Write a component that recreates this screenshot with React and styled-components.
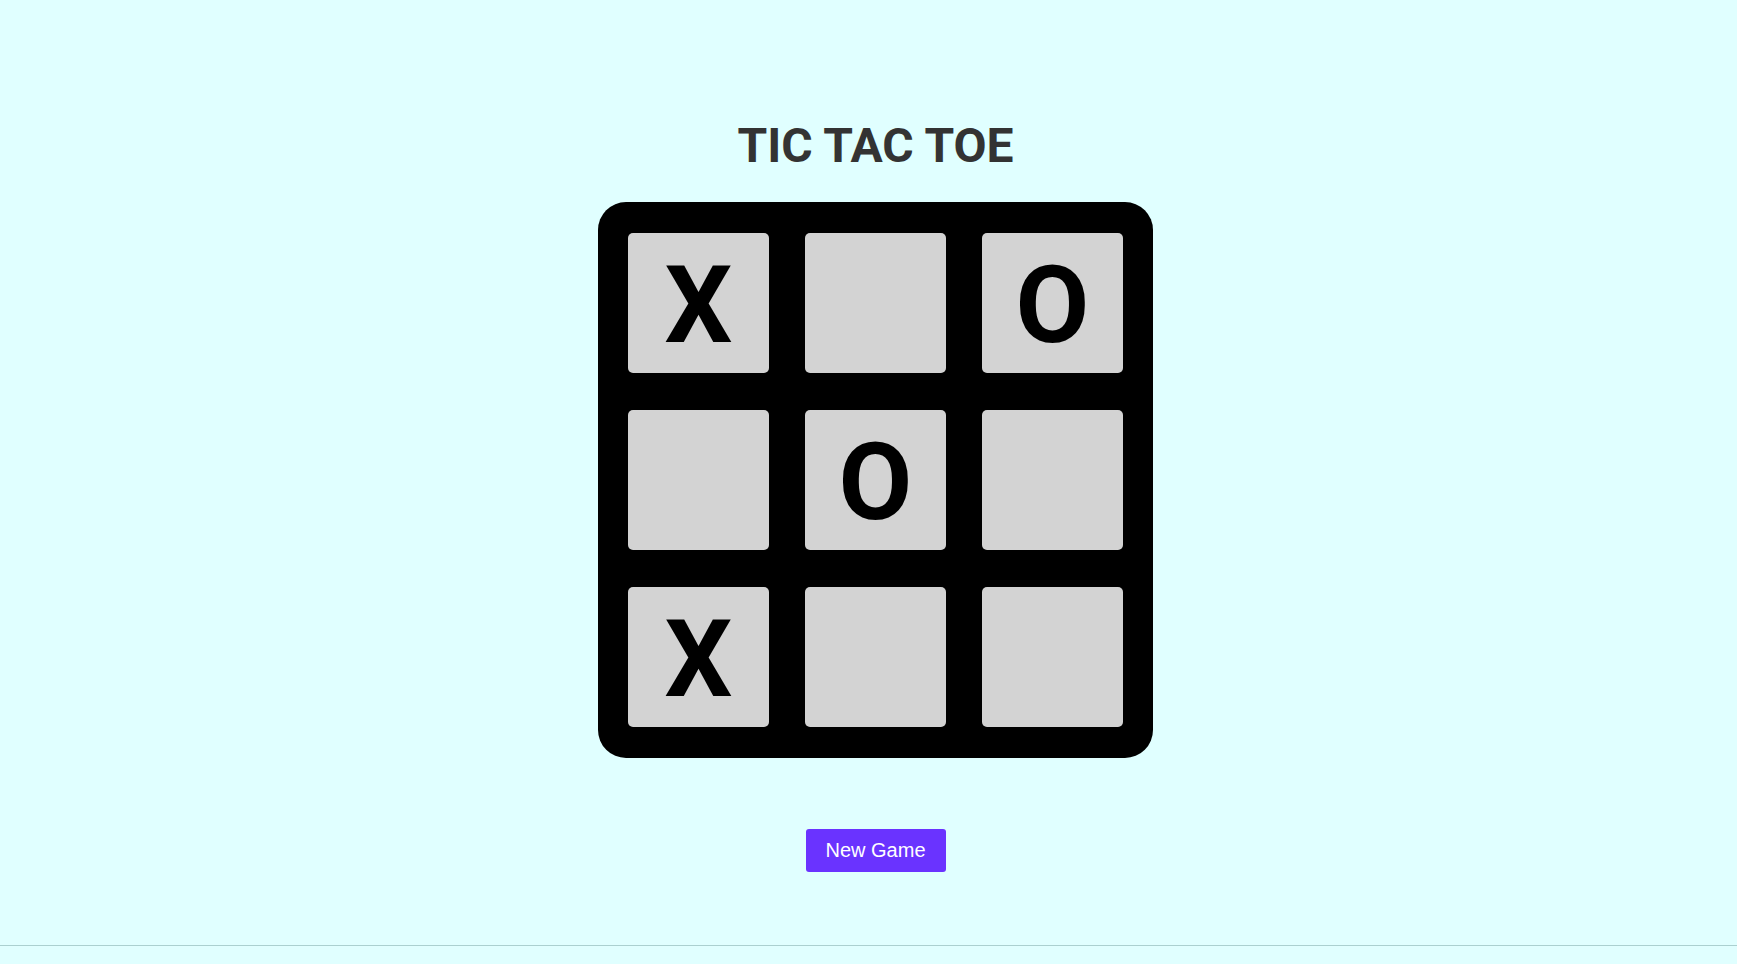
import React, { useState } from "react";
import styled, { createGlobalStyle } from "styled-components";

const GlobalStyle = createGlobalStyle`
  body {
    margin: 0;
    background-color: #e0ffff;
    font-family: Roboto, "Liberation Sans", Arial, sans-serif;
  }
`;

const Main = styled.main`
  height: 946px;
  box-sizing: border-box;
  padding: 118px 0 0 14px;
  display: flex;
  flex-direction: column;
  align-items: center;
  border-bottom: 1px solid #abd0d0;
`;

const Title = styled.h1`
  margin: 0;
  font-size: 48px;
  font-weight: 700;
  line-height: 55px;
  color: #333333;
`;

const Board = styled.div`
  margin-top: 29px;
  width: 555px;
  height: 556px;
  box-sizing: border-box;
  padding: 31px 30px;
  background-color: #000;
  border-radius: 28px;
  display: grid;
  grid-template-columns: repeat(3, 141px);
  grid-template-rows: repeat(3, 140px);
  column-gap: 36px;
  row-gap: 37px;
`;

const Cell = styled.button`
  border: none;
  padding: 5px 0 0;
  margin: 0;
  background-color: #d3d3d3;
  border-radius: 5px;
  display: flex;
  align-items: center;
  justify-content: center;
  font-family: Roboto, "Liberation Sans", Arial, sans-serif;
  font-size: 107px;
  font-weight: 700;
  line-height: 1;
  color: #000;
  cursor: pointer;
`;

const NewGameButton = styled.button`
  margin-top: 71px;
  width: 140px;
  height: 43px;
  border: none;
  border-radius: 3px;
  background-color: #6a33ff;
  color: #ffffff;
  font-family: "Liberation Sans", Arial, sans-serif;
  font-size: 20px;
  cursor: pointer;
`;

const START = ["X", "", "O", "", "O", "", "X", "", ""];

const App = () => {
  const [cells, setCells] = useState(START);

  return (
    <>
      <GlobalStyle />
      <Main>
        <Title>TIC TAC TOE</Title>
        <Board>
          {cells.map((value, index) => (
            <Cell key={index}>{value}</Cell>
          ))}
        </Board>
        <NewGameButton onClick={() => setCells(Array(9).fill(""))}>
          New Game
        </NewGameButton>
      </Main>
    </>
  );
};

export default App;
